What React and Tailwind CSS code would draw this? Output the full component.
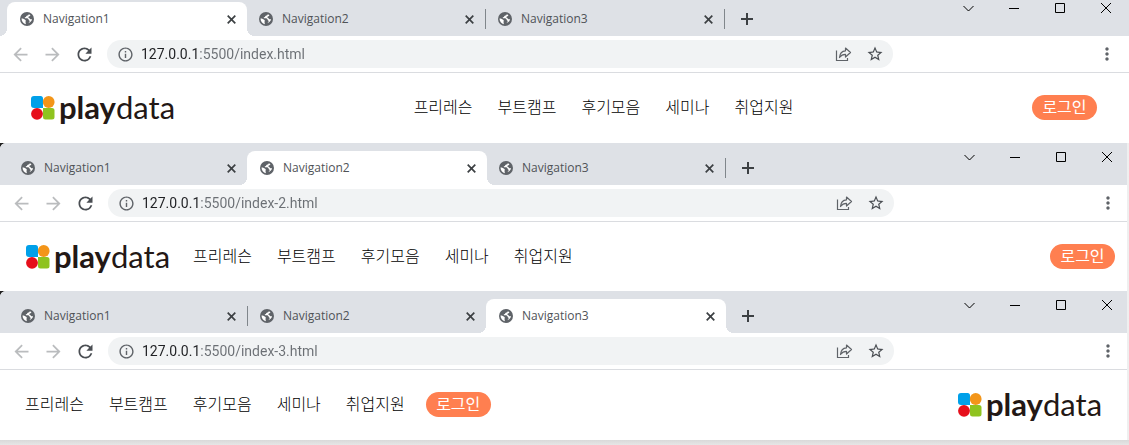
import React from "react";
import {
  MdArrowBack,
  MdArrowForward,
  MdRefresh,
  MdInfoOutline,
  MdStarBorder,
  MdMoreVert,
} from "react-icons/md";

const TABS = ["Navigation1", "Navigation2", "Navigation3"];
const MENU = ["프리레슨", "부트캠프", "후기모음", "세미나", "취업지원"];

function Globe() {
  return (
    <svg viewBox="0 0 14 14" className="size-[14px] shrink-0">
      <circle cx="7" cy="7" r="7" fill="#5f6368" />
      <path
        d="M9.200 1.600c.3 1.300-.4 1.900-1.600 2-.9.100-.9.900-1.200 1.500-.3.500-1.200.4-1.100 1.100.1.600.9.500 1.700.5 1.300 0 1.900.6 1.900 1.500 0 .7 1.100.4 1.200 1.200.1.500-.2 1.200-.7 1.700 1.900-.9 3-2.400 3-4.300 0-2.400-1.300-4.300-3.200-5.200z"
        fill="none"
      />
      <path
        d="M8.700 2.200c-.1 1-.9 1.400-1.900 1.500-.6.100-.5.800-.9 1.200-.4.300-1.200.2-1.200.9 0 .6.700.5 1.500.5 1.600 0 2.500.5 2.500 1.600 0 .7 1 .4 1 1.200 0 .8-.8 1.500-1.500 2.100 2.200-.6 3.600-2.100 3.900-4.100-.9.400-1.800.3-2.200-.4-.4-.8-1.500-.4-1.500-1.400 0-.8.900-.8 1.600-1.200.4-.3.400-1-.1-1.400z"
        fill="white"
      />
      <path d="M1.500 6.600c1.300 0 2.500.3 3.600 1.200.7.600 1 1.100.5 1.700-.4.500.3 1.200.2 2.700C3.400 11.700 1.500 9.500 1.500 6.600z" fill="white" />
    </svg>
  );
}

function Tab({ title, active, divided }) {
  return (
    <div
      className={
        active
          ? "relative z-10 -mr-px flex h-[34px] w-[240px] items-center rounded-t-lg bg-white pr-[11px] pl-[13px] before:absolute before:bottom-0 before:-left-2 before:size-2 before:bg-[radial-gradient(circle_at_0_0,transparent_8px,white_8px)] after:absolute after:-right-2 after:bottom-0 after:size-2 after:bg-[radial-gradient(circle_at_100%_0,transparent_8px,white_8px)]"
          : "relative flex h-[34px] w-[239px] items-center pr-[11px] pl-[13px]"
      }
    >
      {divided && <span className="absolute top-[7px] left-0 h-5 w-px bg-[#80868b]" />}
      <Globe />
      <button
        type="button"
        role="tab"
        aria-selected={active}
        className="ml-[9px] flex-1 text-left text-[12px] leading-4 text-[#4f5357]"
      >
        {title}
      </button>
      <button type="button" aria-label={`Close ${title}`} className="text-[#3c4043]">
        <svg viewBox="0 0 9 9" className="size-[9px]" fill="none" stroke="currentColor" strokeWidth="1.7">
          <path d="M.7.7l7.600 7.600M8.300.7L.7 8.300" />
        </svg>
      </button>
    </div>
  );
}

function WindowControls() {
  const button = "flex h-4 w-[30px] items-center justify-center";
  return (
    <div className="ml-auto flex gap-4 text-black">
      <button type="button" aria-label="Search tabs" className={button}>
        <svg viewBox="0 0 11 11" className="size-[11px]" fill="none" stroke="currentColor">
          <path d="M.5 3l5 5 5-5" />
        </svg>
      </button>
      <button type="button" aria-label="Minimize" className={button}>
        <svg viewBox="0 0 10 10" className="size-[10px]" fill="none" stroke="currentColor">
          <path d="M0 5.5h10" />
        </svg>
      </button>
      <button type="button" aria-label="Maximize" className={button}>
        <svg viewBox="0 0 10 10" className="size-[10px]" fill="none" stroke="currentColor">
          <path d="M.5.5h9v9h-9z" />
        </svg>
      </button>
      <button type="button" aria-label="Close window" className={button}>
        <svg viewBox="0 0 10 10" className="size-[10px]" fill="none" stroke="currentColor">
          <path d="M0 0l10 10M10 0L0 10" />
        </svg>
      </button>
    </div>
  );
}

function Toolbar({ url, className }) {
  return (
    <div className={`flex h-[37px] items-center border-b border-[#dadce0] bg-white ${className}`}>
      <div className="flex gap-[11px]">
        <button type="button" aria-label="Back" className="text-[#babcbe]">
          <MdArrowBack className="size-[21px]" />
        </button>
        <button type="button" aria-label="Forward" className="text-[#babcbe]">
          <MdArrowForward className="size-[21px]" />
        </button>
        <button type="button" aria-label="Reload" className="text-[#4a4e53]">
          <MdRefresh className="size-[21px]" />
        </button>
      </div>
      <div className="ml-3 flex h-7 flex-1 items-center rounded-full bg-[#f1f3f4] pr-[9px] pl-[10px] text-[#5f6368]">
        <MdInfoOutline className="size-[17px] shrink-0" />
        <input
          type="text"
          aria-label="Address"
          defaultValue={url}
          className="ml-[7px] min-w-0 flex-1 bg-[linear-gradient(to_right,#202124_56px,#6b6f74_56px)] bg-clip-text font-[Roboto,sans-serif] text-[14px] leading-5 text-transparent outline-none"
        />
        <div className="flex gap-[14px]">
          <button type="button" aria-label="Share">
            <svg viewBox="0 0 18 18" className="size-[18px]" fill="none" stroke="currentColor" strokeWidth="1.2">
              <path d="M2.500 5.500v10h11v-2.500" />
              <path d="M5.500 12.500c.3-4 2.500-6.500 6-6.700V3l5 4.500-5 4.500V9.300c-2.500 0-4.500 1-6 3.200z" strokeLinejoin="round" />
            </svg>
          </button>
          <button type="button" aria-label="Bookmark this page" className="text-[#4a4e53]">
            <MdStarBorder className="size-[18px]" />
          </button>
        </div>
      </div>
      <button type="button" aria-label="Menu" className="ml-[204px] text-[#5f6368]">
        <MdMoreVert className="size-5" />
      </button>
    </div>
  );
}

function Logo() {
  return (
    <a href="#" className="flex w-36 items-center" aria-label="playdata">
      <svg viewBox="0 0 24 24" className="mt-0.5 size-6 shrink-0">
        <path d="M3 0h6.500Q12 0 12 2.500V12H3Q0 12 0 9V3Q0 0 3 0z" fill="#00a0e9" />
        <circle cx="17.700" cy="6" r="5.900" fill="#f39519" />
        <circle cx="6" cy="17.800" r="5.900" fill="#e60f1b" />
        <path d="M12 12h9q2.500 0 2.500 2.500V21q0 2.500-2.500 2.500h-6.500Q12 23.500 12 21z" fill="#8fc31f" />
      </svg>
      <span className="ml-1 font-[Lato,sans-serif] text-[31px] leading-[30px] text-[#231815]">
        <b className="font-bold">play</b>data
      </span>
    </a>
  );
}

function Menu() {
  return (
    <nav>
      <ul className="flex gap-[25px] text-[16px] leading-6 font-light whitespace-nowrap text-black">
        {MENU.map((item) => (
          <li key={item}>
            <a href="#">{item}</a>
          </li>
        ))}
      </ul>
    </nav>
  );
}

function Login() {
  return (
    <button
      type="button"
      className="h-[25px] min-w-[65px] rounded-full bg-[#ff7f50] px-[10px] text-[16px] leading-6 whitespace-nowrap text-white"
    >
      로그인
    </button>
  );
}

function BrowserWindow({ active, url, first, children }) {
  return (
    <div className={first ? "" : "bg-linear-to-r from-[#202020] from-50% to-[#efefef] to-50%"}>
      <section className={first ? "bg-white" : "mr-0.5 overflow-hidden rounded-tl-md bg-white"}>
        <div className={`flex bg-[#dee1e6] ${first ? "h-9 pr-2 pl-[7px]" : "h-[42px] pt-[6px] pr-[5px] pl-2"}`}>
          <div role="tablist" className="flex items-end">
            {TABS.map((title, i) => (
              <Tab
                key={title}
                title={title}
                active={i === active}
                divided={i > 0 && i !== active && i - 1 !== active}
              />
            ))}
          </div>
          <div className="relative flex h-[34px] items-center self-end pl-[17px]">
            {active !== 2 && <span className="absolute top-[7px] left-0 h-5 w-px bg-[#80868b]" />}
            <button type="button" aria-label="New tab" className="text-[#3c4043]">
              <svg viewBox="0 0 12 12" className="size-3" fill="none" stroke="currentColor" strokeWidth="2">
                <path d="M6 0v12M0 6h12" />
              </svg>
            </button>
          </div>
          <WindowControls />
        </div>
        <Toolbar url={url} className={first ? "pr-3 pl-[10px]" : "pr-[9px] pl-[11px]"} />
        {children}
      </section>
    </div>
  );
}

export default function App() {
  return (
    <main className="bg-[#efefef] font-['Open_Sans','Noto_Sans_CJK_KR',sans-serif]">
      <BrowserWindow first active={0} url="127.0.0.1:5500/index.html">
        <header className="flex h-[70px] items-center justify-between pr-8 pb-0.5 pl-[31px]">
          <Logo />
          <Menu />
          <Login />
        </header>
      </BrowserWindow>
      <BrowserWindow active={1} url="127.0.0.1:5500/index-2.html">
        <header className="flex h-[69px] items-center pr-3 pb-px pl-[26px]">
          <Logo />
          <div className="ml-[23px] flex-1">
            <Menu />
          </div>
          <Login />
        </header>
      </BrowserWindow>
      <BrowserWindow active={2} url="127.0.0.1:5500/index-3.html">
        <header className="flex h-[70px] items-center justify-between pr-[25px] pb-0.5 pl-[25px]">
          <div className="flex items-center gap-[21px]">
            <Menu />
            <Login />
          </div>
          <Logo />
        </header>
      </BrowserWindow>
      <div className="h-[5px] bg-linear-to-b from-[#d9d9d9] to-[#e6e6e6]" />
    </main>
  );
}
